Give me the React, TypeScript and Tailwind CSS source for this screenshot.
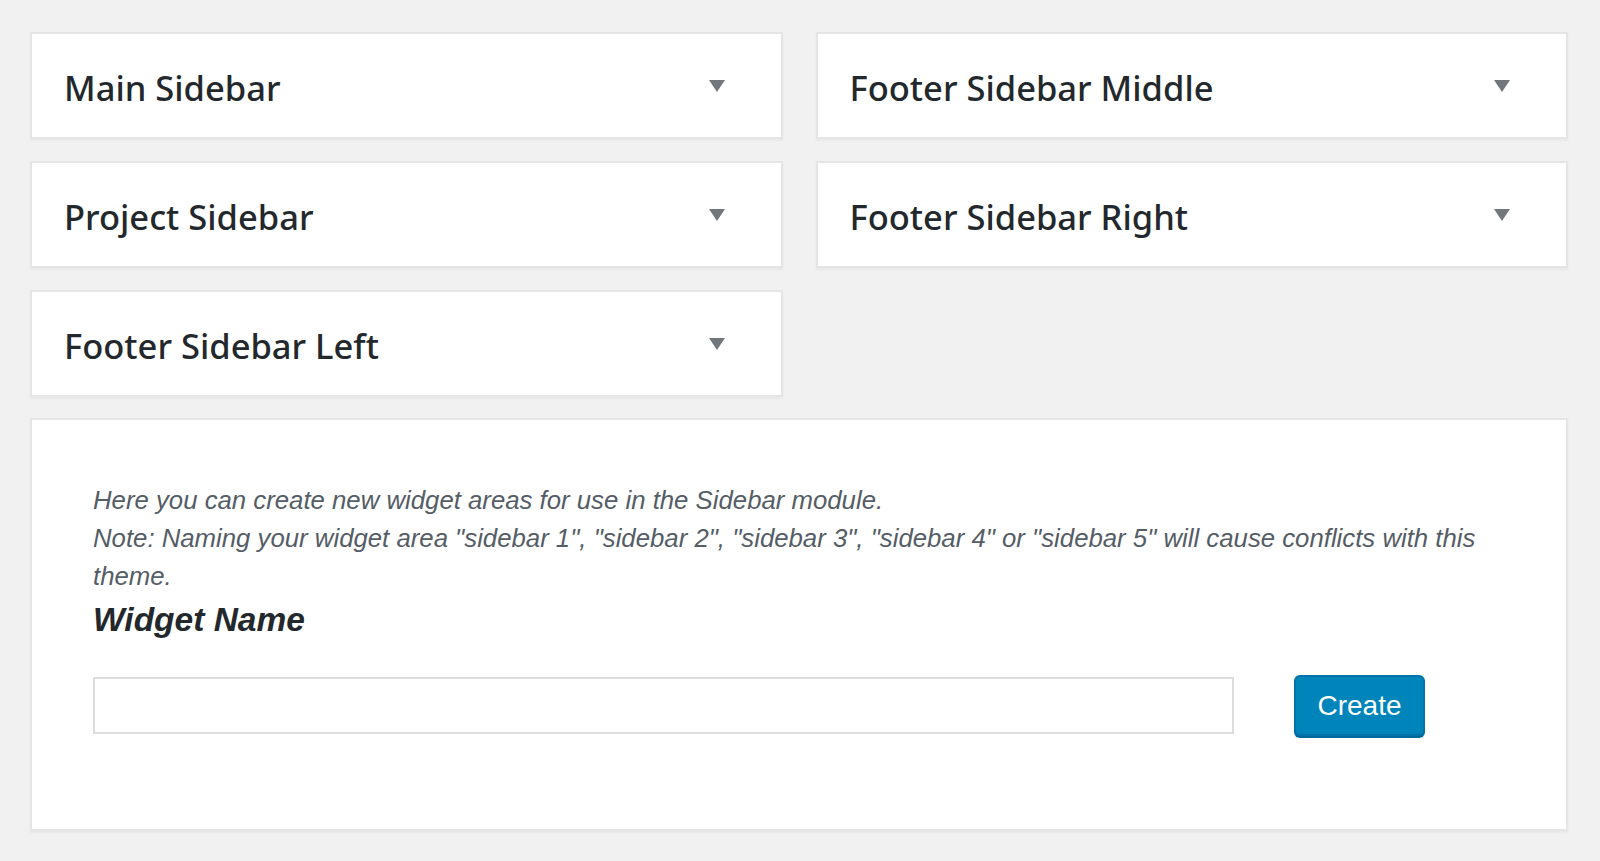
import React from "react";

const sidebars = [
  ["Main Sidebar", "Footer Sidebar Middle"],
  ["Project Sidebar", "Footer Sidebar Right"],
  ["Footer Sidebar Left", null],
];

const Caret = () => (
  <svg width="16" height="12" viewBox="0 0 16 12" className="shrink-0">
    <polygon points="0,0 16,0 8,12" fill="#72777c" />
  </svg>
);

const SidebarCard = ({ title }: { title: string }) => (
  <div className="flex h-[107px] items-center justify-between border-2 border-[#e5e5e5] bg-white pl-[32px] pr-[56px] shadow-[0_2px_2px_rgba(0,0,0,0.04)]">
    <h2
      className="pt-[4px] text-[34.5px] font-medium text-[#23282d]"
      style={{ fontFamily: '"Noto Sans", "Open Sans", sans-serif' }}
    >
      {title}
    </h2>
    <Caret />
  </div>
);

export default function App() {
  return (
    <div
      className="min-h-[861px] w-[1600px] bg-[#f1f1f1] pt-[32px] pl-[30px] pr-[32px]"
      style={{ fontFamily: '"Liberation Sans", Arial, sans-serif' }}
    >
      <div className="flex flex-col gap-[22px]">
        {sidebars.map((row, i) => (
          <div key={i} className="grid grid-cols-2 gap-x-[33px]">
            <SidebarCard title={row[0] as string} />
            {row[1] ? <SidebarCard title={row[1]} /> : <div />}
          </div>
        ))}
      </div>

      <div className="mt-[21px] h-[413px] border-2 border-[#e5e5e5] bg-white pt-[61px] pl-[61px] shadow-[0_2px_2px_rgba(0,0,0,0.04)]">
        <p className="text-[25.75px] italic leading-[38px] text-[#555d66]">
          Here you can create new widget areas for use in the Sidebar module.
          <br />
          Note: Naming your widget area "sidebar 1", "sidebar 2", "sidebar 3", "sidebar 4" or "sidebar 5" will cause conflicts with this
          <br />
          theme.
        </p>
        <h3 className="mt-[4px] text-[33.5px] font-bold italic leading-[42px] text-[#23282d]">Widget Name</h3>
        <div className="mt-[34px] flex items-center">
          <input
            type="text"
            className="h-[57px] w-[1141px] border-2 border-[#dcdcdc] bg-white outline-none"
          />
          <button className="ml-[60px] h-[61px] w-[131px] rounded-[6px] border-2 border-[#0073aa] bg-[#0085ba] text-[28px] text-white shadow-[0_2px_0_#006799]">
            Create
          </button>
        </div>
      </div>
    </div>
  );
}
